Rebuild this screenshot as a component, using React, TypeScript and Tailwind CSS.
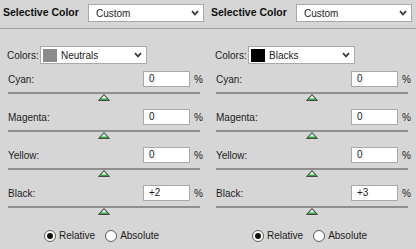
import React from 'react';

interface PanelProps {
  swatch: string;
  colorName: string;
  black: string;
}

const Chevron = () => (
  <svg width="8" height="6" viewBox="0 0 8 6" className="shrink-0">
    <path d="M1 1.2 L4 4.4 L7 1.2" fill="none" stroke="#3c3c3c" strokeWidth="1.8" />
  </svg>
);

const Thumb = () => (
  <svg width="12" height="7" viewBox="0 0 12 7">
    <path d="M6 0.5 L11.5 6.5 L0.5 6.5 Z" fill="#36a845" stroke="#4a4a4a" strokeWidth="1" />
    <path d="M6 1.8 L8.6 4.4 L3.4 4.4 Z" fill="#ffffff" />
  </svg>
);

const SliderRow = ({ label, value }: { label: string; value: string }) => (
  <div className="flex flex-col mb-[8px]">
    <div className="flex items-center h-[16px] pl-[8px]">
      <span className="flex-1">{label}</span>
      <div className="w-[47px] h-[16px] bg-white border border-[#a9a9a9] pl-[5px] flex items-center leading-none">
        {value}
      </div>
      <span className="w-[18px] pl-[4px]">%</span>
    </div>
    <div className="mt-[5px] mx-[8px] h-[2px] bg-[#8e8e8e]" />
    <div className="flex justify-center pr-[1px] h-[7px]">
      <Thumb />
    </div>
  </div>
);

const Radio = ({ checked, label }: { checked?: boolean; label: string }) => (
  <div className="flex items-center gap-[3px]">
    <div className="w-[12px] h-[12px] rounded-full bg-white border border-[#5a5a5a] flex items-center justify-center">
      {checked && <div className="w-[6px] h-[6px] rounded-full bg-[#111]" />}
    </div>
    <span>{label}</span>
  </div>
);

const Panel: React.FC<PanelProps> = ({ swatch, colorName, black }) => (
  <div className="w-[208px] flex flex-col">
    {/* header */}
    <div className="h-[28px] flex items-start pt-[4px] pl-[3px]">
      <span className="w-[85px] h-[18px] flex items-center font-bold text-[10.5px] text-[#111]">Selective Color</span>
      <div className="w-[116px] h-[18px] bg-white border border-[#a9a9a9] flex items-center pl-[7px] pr-[4px]">
        <span className="flex-1">Custom</span>
        <Chevron />
      </div>
    </div>
    <div className="h-px bg-[#a2a2a2]" />

    {/* colors */}
    <div className="mt-[17px] flex items-center pl-[7px] h-[18px]">
      <span className="w-[33px]">Colors:</span>
      <div className="w-[107px] h-[18px] bg-white border border-[#a9a9a9] flex items-center pl-[2px] pr-[4px]">
        <div className="w-[14px] h-[13px]" style={{ background: swatch }} />
        <span className="flex-1 pl-[4px]">{colorName}</span>
        <Chevron />
      </div>
    </div>

    <div className="mt-[7px] flex flex-col">
      <SliderRow label="Cyan:" value="0" />
      <SliderRow label="Magenta:" value="0" />
      <SliderRow label="Yellow:" value="0" />
      <SliderRow label="Black:" value={black} />
    </div>

    <div className="flex items-center gap-[10px] pl-[44px] mt-[5px]">
      <Radio checked label="Relative" />
      <Radio label="Absolute" />
    </div>
  </div>
);

export default function App() {
  return (
    <div
      className="w-[416px] h-[249px] bg-[#d6d6d6] flex text-[10px] text-[#1c1c1c] overflow-hidden"
      style={{ fontFamily: '"Liberation Sans", Arial, sans-serif' }}
    >
      <Panel swatch="#8b8b8b" colorName="Neutrals" black="+2" />
      <Panel swatch="#000000" colorName="Blacks" black="+3" />
    </div>
  );
}
